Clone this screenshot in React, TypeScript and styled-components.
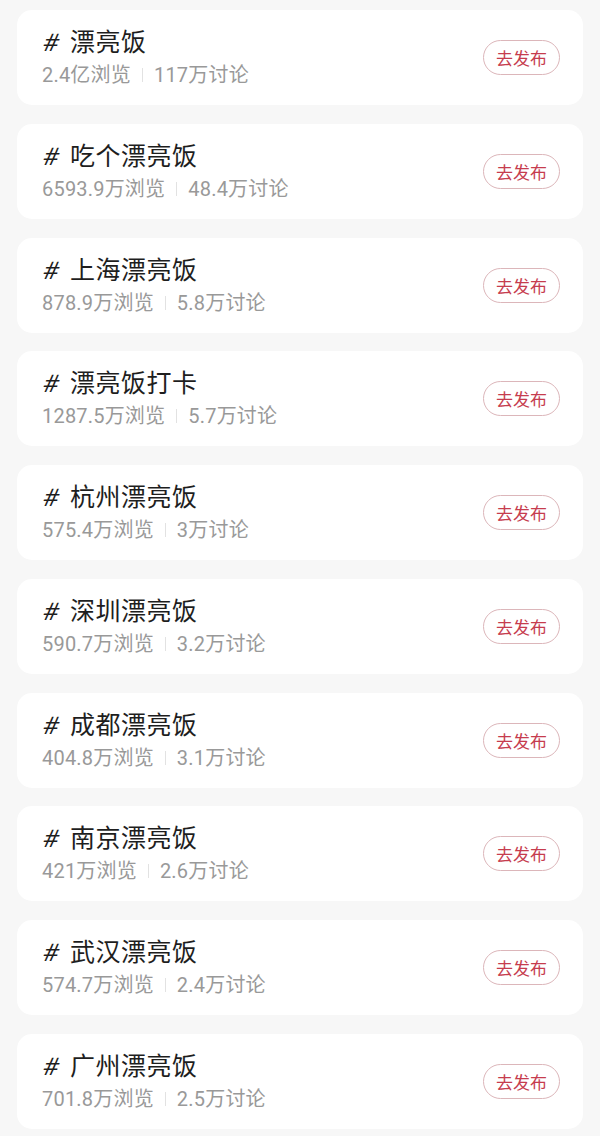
import styled, { createGlobalStyle } from "styled-components";

const GlobalStyle = createGlobalStyle`
  html, body {
    margin: 0;
    padding: 0;
    background: #f7f7f7;
  }
  body {
    font-family: "Noto Sans CJK SC", "Noto Sans", sans-serif;
  }
`;

const topics = [
  { name: "漂亮饭", views: "2.4亿浏览", talks: "117万讨论" },
  { name: "吃个漂亮饭", views: "6593.9万浏览", talks: "48.4万讨论" },
  { name: "上海漂亮饭", views: "878.9万浏览", talks: "5.8万讨论" },
  { name: "漂亮饭打卡", views: "1287.5万浏览", talks: "5.7万讨论" },
  { name: "杭州漂亮饭", views: "575.4万浏览", talks: "3万讨论" },
  { name: "深圳漂亮饭", views: "590.7万浏览", talks: "3.2万讨论" },
  { name: "成都漂亮饭", views: "404.8万浏览", talks: "3.1万讨论" },
  { name: "南京漂亮饭", views: "421万浏览", talks: "2.6万讨论" },
  { name: "武汉漂亮饭", views: "574.7万浏览", talks: "2.4万讨论" },
  { name: "广州漂亮饭", views: "701.8万浏览", talks: "2.5万讨论" },
];

function App() {
  return (
    <>
      <GlobalStyle />
      <List>
        {topics.map((t) => (
          <Card key={t.name}>
            <Info>
              <Title>
                <Hash>#</Hash>
                {t.name}
              </Title>
              <Stats>
                <span>{t.views}</span>
                <Divider />
                <span>{t.talks}</span>
              </Stats>
            </Info>
            <PostButton>去发布</PostButton>
          </Card>
        ))}
      </List>
    </>
  );
}

export default App;

const List = styled.div`
  display: flex;
  flex-direction: column;
  gap: 18.75px;
  padding: 10px 17px 0 17px;
`;

const Card = styled.div`
  display: flex;
  align-items: center;
  justify-content: space-between;
  height: 95px;
  box-sizing: border-box;
  padding: 0 23px 0 25px;
  background: #ffffff;
  border-radius: 15px;
`;

const Info = styled.div`
  display: flex;
  flex-direction: column;
  margin-top: -1px;
`;

const Title = styled.div`
  font-size: 25px;
  line-height: 30px;
  color: #1e1e1e;
  letter-spacing: 0.5px;
  padding-left: 2px;
`;

const Hash = styled.span`
  display: inline-block;
  font-family: "Noto Sans", sans-serif;
  font-size: 24px;
  transform: skewX(-14deg);
  margin-right: 10px;
`;

const Stats = styled.div`
  display: flex;
  align-items: center;
  margin-top: 4px;
  font-family: "Roboto", "Noto Sans CJK SC", sans-serif;
  font-size: 20px;
  line-height: 28px;
  color: #999999;
  letter-spacing: 0.2px;
`;

const Divider = styled.span`
  width: 1px;
  height: 14px;
  background: #e2e2e2;
  margin: 0 11px;
`;

const PostButton = styled.button`
  width: 77px;
  height: 35px;
  box-sizing: border-box;
  border: 1px solid #dcb6ba;
  border-radius: 18px;
  background: #ffffff;
  color: #c63c4e;
  font-family: "Noto Sans CJK SC", sans-serif;
  font-size: 17px;
  padding: 0;
  line-height: 33px;
`;
